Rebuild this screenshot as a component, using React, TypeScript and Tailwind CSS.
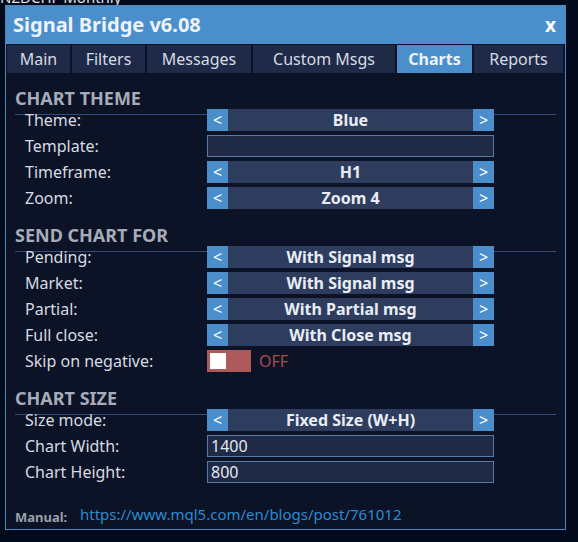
const Spinner = ({ value }: { value: string }) => (
  <div className="flex h-[22px] w-[287px]">
    <div className="flex w-[21px] items-center justify-center bg-[#4a8fcc] text-[16px] text-white">&lt;</div>
    <div className="flex flex-1 items-center justify-center bg-[#2e3d5e] text-[16px] font-bold text-[#e8edf5]">
      {value}
    </div>
    <div className="flex w-[21px] items-center justify-center bg-[#4a8fcc] text-[16px] text-white">&gt;</div>
  </div>
);

const TextBox = ({ value }: { value: string }) => (
  <div className="flex h-[22px] w-[287px] items-center border border-[#5a79a6] bg-[#1f2a45] pl-[3px] text-[16px] text-[#e4e9f2]">
    {value}
  </div>
);

const Row = ({ label, children }: { label: string; children: React.ReactNode }) => (
  <div className="flex h-[22px] items-center">
    <div className="w-[192px] pl-[10px] text-[16px] text-[#d6dbe3]">{label}</div>
    {children}
  </div>
);

const Section = ({ title, children, className = "" }: { title: string; children: React.ReactNode; className?: string }) => (
  <div className={className}>
    <div className="h-[27px] border-b border-[#2f4d7a] text-[18px] font-bold leading-[20px] text-[#a6acb8]">{title}</div>
    <div className="relative -mt-[6px] flex flex-col gap-[4px]">{children}</div>
  </div>
);

const tabs = [
  { name: "Main", w: "w-[63px]" },
  { name: "Filters", w: "w-[73px]" },
  { name: "Messages", w: "w-[104px]" },
  { name: "Custom Msgs", w: "w-[142px]" },
  { name: "Charts", w: "w-[75px]", active: true },
  { name: "Reports", w: "w-[89px]" },
];

export default function App() {
  return (
    <div className="h-[542px] w-[578px] overflow-hidden bg-[#020a1c] font-['Noto_Sans',sans-serif]">
      <div className="flex h-[5px] items-end overflow-hidden text-[15px] leading-[15px] text-[#e0e0e0]">
        NZDCHF Monthly
      </div>
      <div className="ml-[5px] flex h-[525px] w-[561px] flex-col border border-[#4a86c0] bg-[#0c1326]">
        <div className="flex h-[38px] items-center justify-between bg-[#4a8fcc] pl-[7px] pr-[9px]">
          <span className="text-[20px] font-bold text-[#eef3fa]">Signal Bridge v6.08</span>
          <span className="text-[19px] font-bold text-white">x</span>
        </div>
        <div className="mt-[1px] flex gap-[2px] px-[1px]">
          {tabs.map((t) => (
            <div
              key={t.name}
              className={`flex h-[28px] items-center justify-center text-[16px] ${t.w} ${
                t.active ? "bg-[#4a8fcc] font-bold text-[#eef3fa]" : "bg-[#1f2a48] text-[#d6dbe3]"
              }`}
            >
              {t.name}
            </div>
          ))}
        </div>
        <div className="mx-[9px] flex flex-col pt-[15px]">
          <Section title="CHART THEME">
            <Row label="Theme:"><Spinner value="Blue" /></Row>
            <Row label="Template:"><TextBox value="" /></Row>
            <Row label="Timeframe:"><Spinner value="H1" /></Row>
            <Row label="Zoom:"><Spinner value="Zoom 4" /></Row>
          </Section>
          <Section title="SEND CHART FOR" className="mt-[16px]">
            <Row label="Pending:"><Spinner value="With Signal msg" /></Row>
            <Row label="Market:"><Spinner value="With Signal msg" /></Row>
            <Row label="Partial:"><Spinner value="With Partial msg" /></Row>
            <Row label="Full close:"><Spinner value="With Close msg" /></Row>
            <Row label="Skip on negative:">
              <div className="flex h-[22px] w-[44px] items-center bg-[#af5a5a] pl-[3px]">
                <div className="h-[16px] w-[16px] bg-white" />
              </div>
              <span className="ml-[8px] text-[16px] text-[#a84c4c]">OFF</span>
            </Row>
          </Section>
          <Section title="CHART SIZE" className="mt-[16px]">
            <Row label="Size mode:"><Spinner value="Fixed Size (W+H)" /></Row>
            <Row label="Chart Width:"><TextBox value="1400" /></Row>
            <Row label="Chart Height:"><TextBox value="800" /></Row>
          </Section>
          <div className="mt-[20px] flex items-baseline">
            <span className="w-[65px] translate-y-[2px] text-[13px] font-bold text-[#9aa0aa]">Manual:</span>
            <span className="text-[15px] text-[#2a8bd0]">https://www.mql5.com/en/blogs/post/761012</span>
          </div>
        </div>
      </div>
    </div>
  );
}
